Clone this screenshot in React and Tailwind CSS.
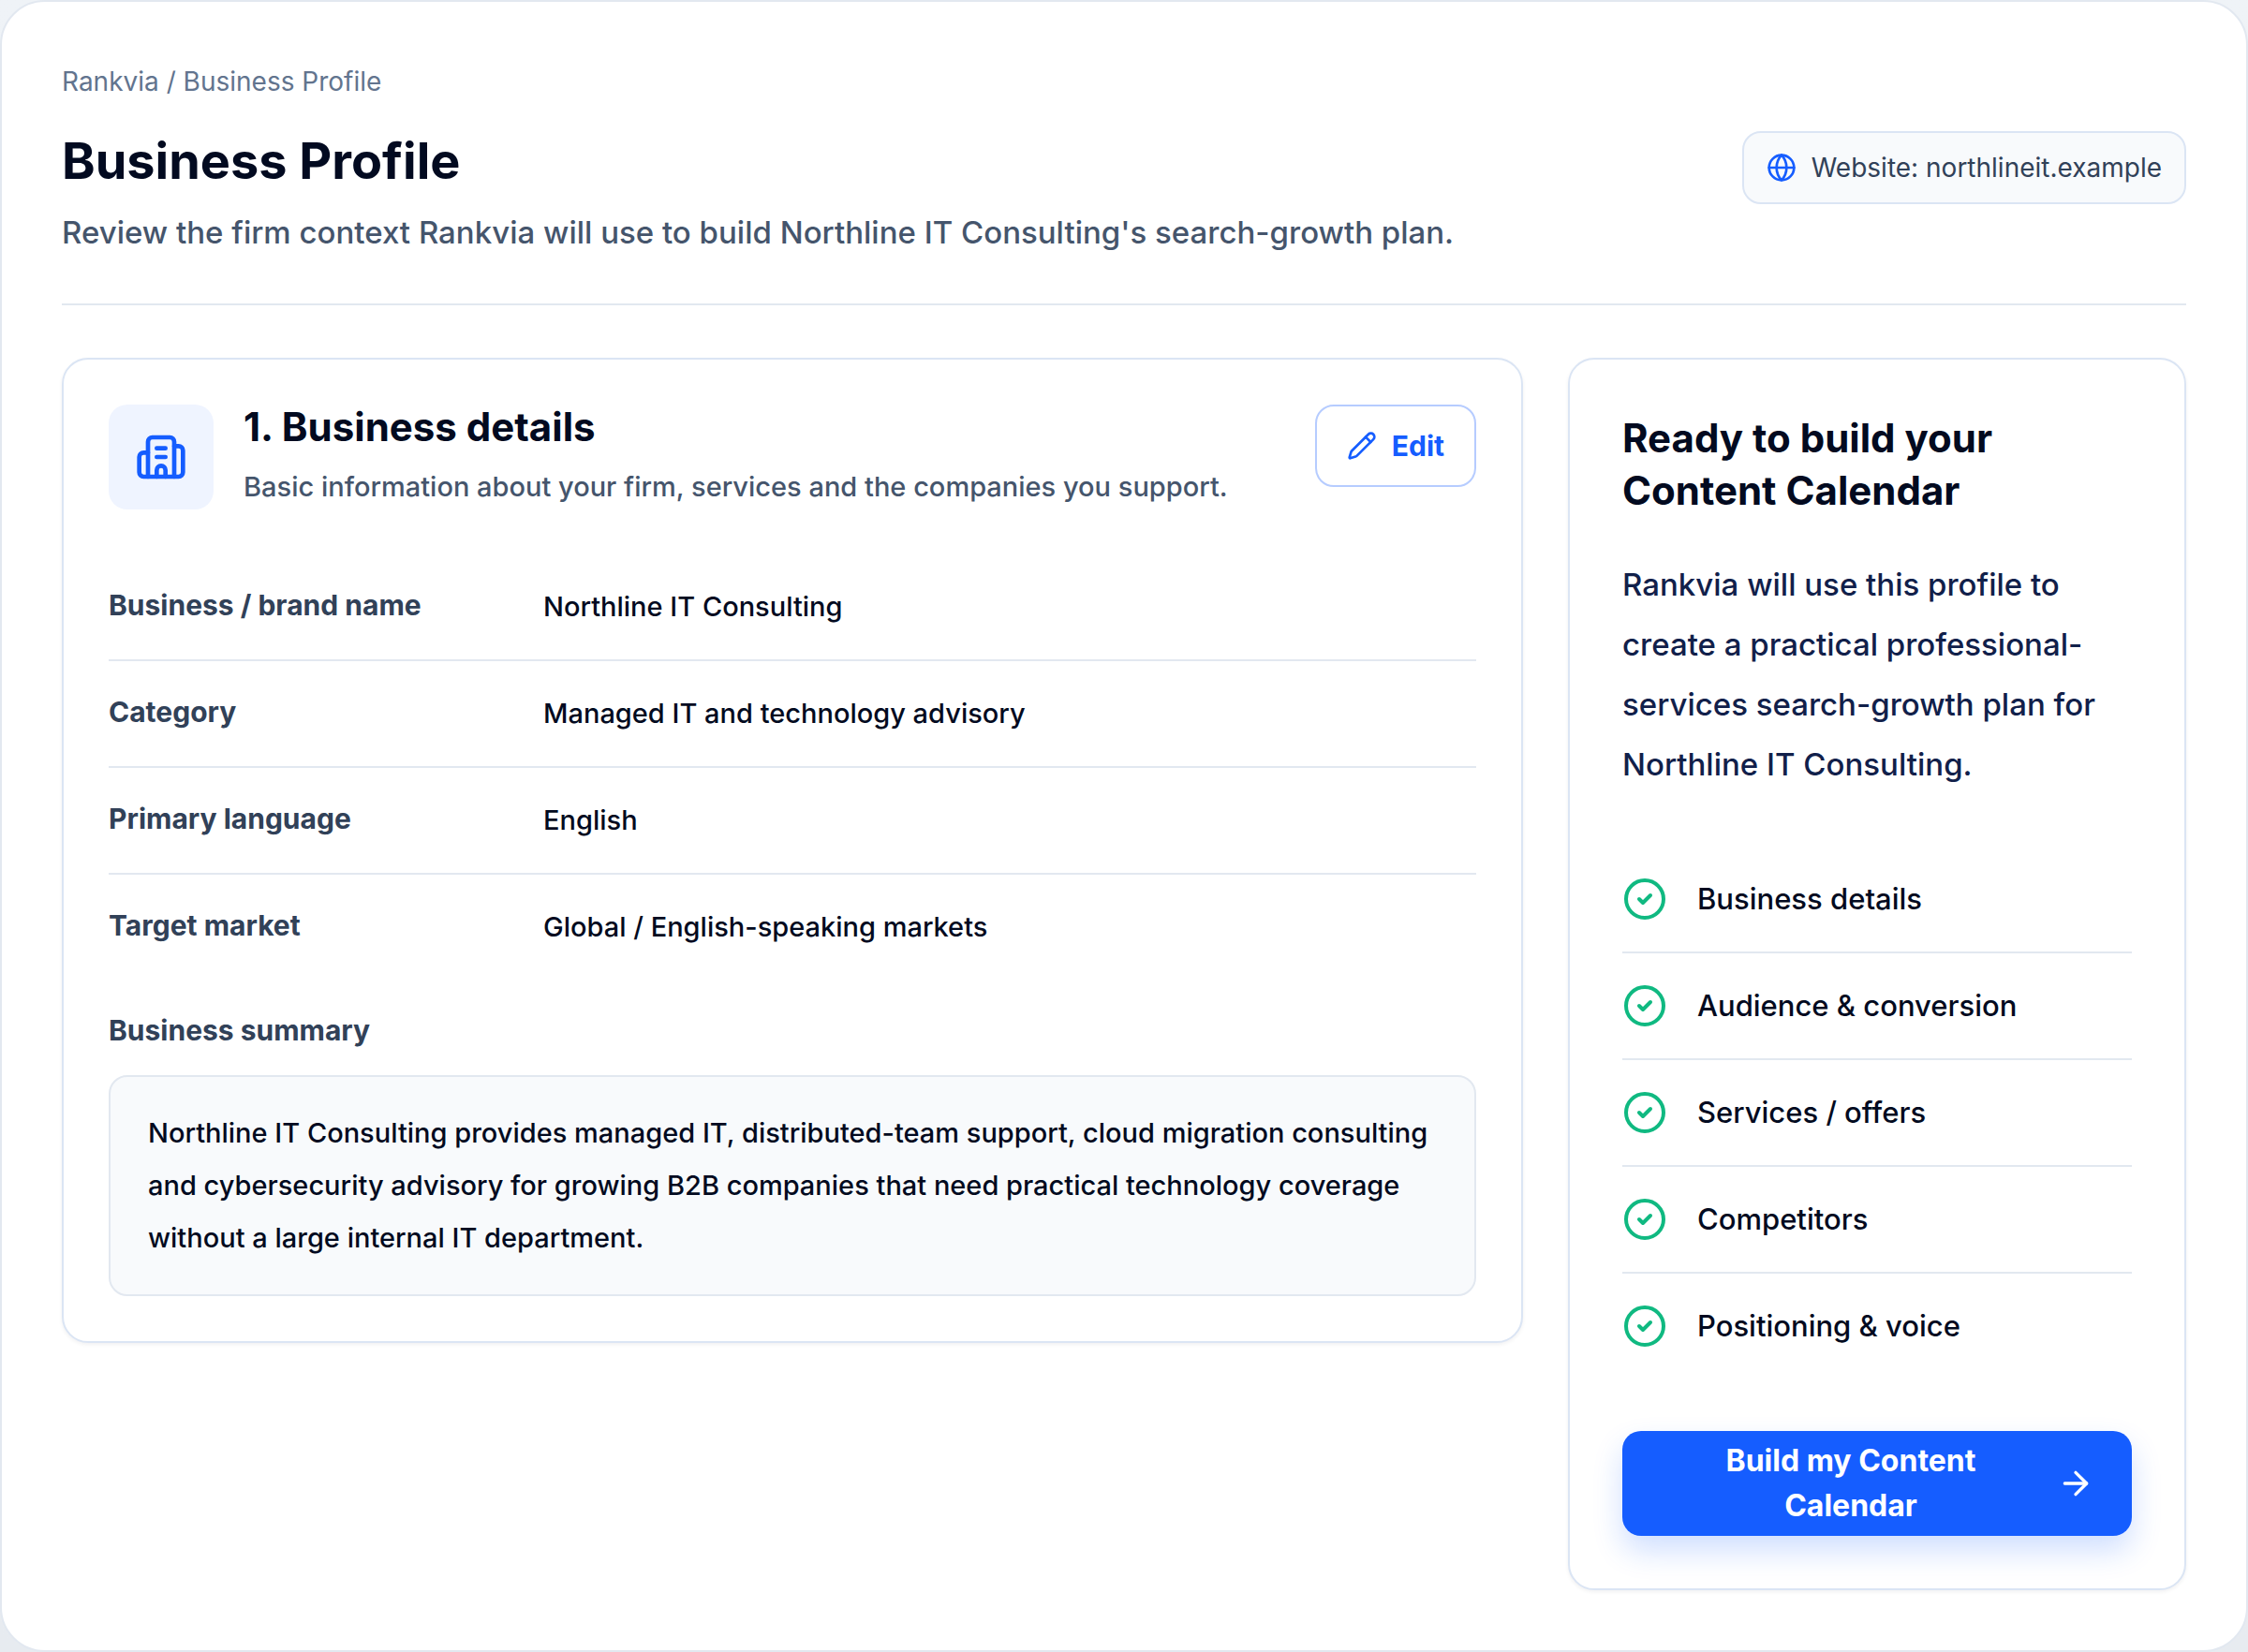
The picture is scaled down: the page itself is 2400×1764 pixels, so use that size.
import React from 'react';
import { ArrowRight, Building2, CircleCheck, Globe, Pencil } from 'lucide-react';

const details = [
  { label: 'Business / brand name', value: 'Northline IT Consulting' },
  { label: 'Category', value: 'Managed IT and technology advisory' },
  { label: 'Primary language', value: 'English' },
  { label: 'Target market', value: 'Global / English-speaking markets' },
];

const checklist = [
  'Business details',
  'Audience & conversion',
  'Services / offers',
  'Competitors',
  'Positioning & voice',
];

function PageHeader() {
  return (
    <header className="border-b-2 border-slate-200 pb-12">
      <nav aria-label="Breadcrumb" className="text-[28px] leading-[42px] text-slate-500">
        <a href="#">Rankvia</a> / <span aria-current="page">Business Profile</span>
      </nav>
      <div className="mt-8 flex items-start justify-between gap-8">
        <div>
          <h1 className="text-[54px] leading-[64px] font-bold text-[#020a20]">Business Profile</h1>
          <p className="mt-4 text-[33px] leading-[56px] font-medium text-slate-600">
            Review the firm context Rankvia will use to build Northline IT Consulting's search-growth plan.
          </p>
        </div>
        <div className="flex shrink-0 items-center gap-4 rounded-[20px] border-2 border-[#dbe5f4] bg-slate-50 px-6 py-4 text-[28px] leading-[42px] text-slate-700">
          <Globe className="size-8 text-[#155dff]" />
          <span>Website: northlineit.example</span>
        </div>
      </div>
    </header>
  );
}

function BusinessDetails() {
  return (
    <section className="rounded-[28px] border-2 border-[#dbe5f4] bg-white p-12 shadow-[0_2px_4px_rgba(15,23,42,0.06)]">
      <div className="flex items-start gap-8">
        <div className="flex size-28 shrink-0 items-center justify-center rounded-[20px] bg-[#eff4ff] text-[#155dff]">
          <Building2 className="size-14" />
        </div>
        <div className="min-w-0 flex-1">
          <h2 className="text-[42px] leading-[48px] font-bold text-[#020a20]">1. Business details</h2>
          <p className="mt-4 text-[29px] leading-[48px] font-medium text-slate-600">
            Basic information about your firm, services and the companies you support.
          </p>
        </div>
        <button
          type="button"
          className="flex shrink-0 items-center gap-4 rounded-[20px] border-2 border-[#b6ccff] px-8 py-5 text-[30px] leading-[44px] font-bold text-[#155dff]"
        >
          <Pencil className="size-8" />
          Edit
        </button>
      </div>

      <dl className="mt-12 divide-y-2 divide-slate-200">
        {details.map(d => (
          <div key={d.label} className="grid grid-cols-[400px_minmax(0,1fr)] gap-16 py-8">
            <dt className="text-[30px] leading-[44px] font-bold text-slate-700">{d.label}</dt>
            <dd className="text-[29px] leading-[48px] font-medium text-[#020a20]">{d.value}</dd>
          </div>
        ))}
      </dl>

      <h3 className="mt-8 text-[30px] leading-[44px] font-bold text-slate-700">Business summary</h3>
      <p className="mt-[26px] rounded-[20px] border-2 border-slate-200 bg-slate-50 px-10 py-8 text-[29px] leading-[56px] font-medium text-[#020a20]">
        Northline IT Consulting provides managed IT, distributed-team support, cloud migration consulting and
        cybersecurity advisory for growing B2B companies that need practical technology coverage without a large
        internal IT department.
      </p>
    </section>
  );
}

function BuildPanel() {
  return (
    <aside className="rounded-[28px] border-2 border-[#dbe5f4] bg-white p-14 shadow-[0_2px_4px_rgba(15,23,42,0.06)]">
      <h2 className="text-[42px] leading-[56px] font-bold text-[#020a20]">
        Ready to build your Content Calendar
      </h2>
      <p className="mt-10 text-[33px] leading-[64px] font-medium text-[#11204a]">
        Rankvia will use this profile to create a practical professional-services search-growth plan for Northline
        IT Consulting.
      </p>
      <ul className="mt-14 divide-y-2 divide-slate-200">
        {checklist.map(item => (
          <li key={item} className="flex items-center gap-8 py-8 text-[31px] leading-[48px] font-medium text-[#020a20]">
            <CircleCheck className="size-12 shrink-0 text-[#10b981]" />
            {item}
          </li>
        ))}
      </ul>
      <button
        type="button"
        className="mt-14 flex w-full items-center justify-center gap-4 rounded-[20px] bg-[#155dff] px-10 py-2 text-[32px] leading-[48px] font-bold text-white shadow-[0_16px_32px_rgba(21,93,255,0.2)]"
      >
        <span className="flex-1">Build my Content Calendar</span>
        <ArrowRight className="size-10 shrink-0" />
      </button>
    </aside>
  );
}

export default function App() {
  return (
    <div className="min-h-screen bg-linear-to-b from-[#eff3f7] to-[#e7ebf0] font-['Inter',sans-serif]">
      <main className="min-h-screen rounded-[48px] border-2 border-slate-200 bg-white p-16">
        <PageHeader />
        <div className="mt-14 grid grid-cols-[minmax(0,1fr)_660px] items-start gap-12">
          <BusinessDetails />
          <BuildPanel />
        </div>
      </main>
    </div>
  );
}
